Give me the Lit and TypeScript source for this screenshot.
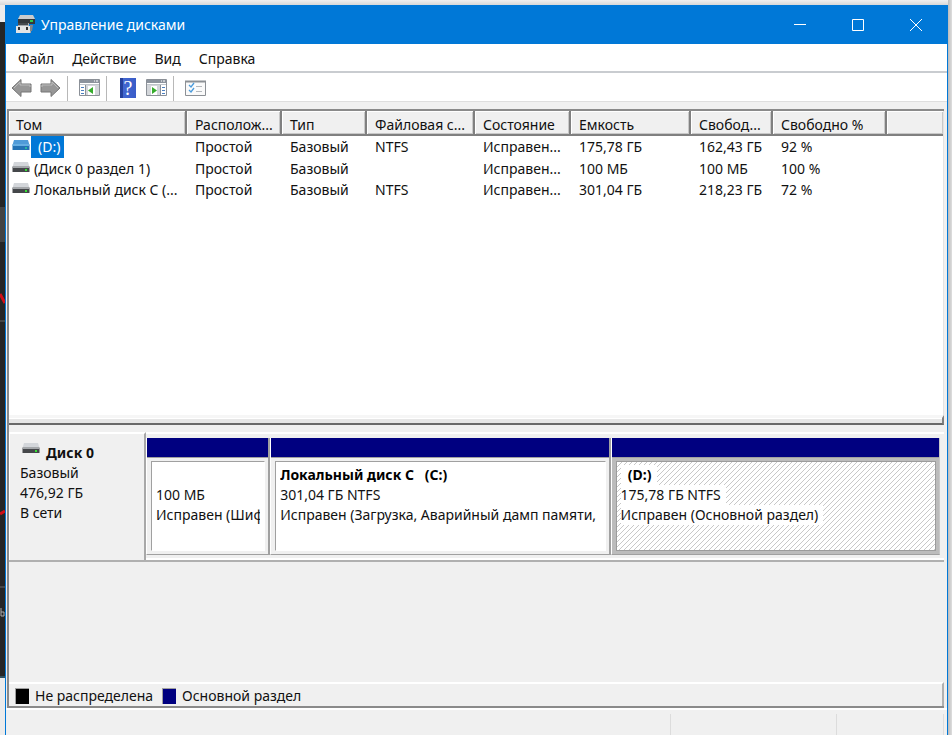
import { LitElement, html, svg, css, nothing } from "lit";
import { customElement } from "lit/decorators.js";
import { classMap } from "lit/directives/class-map.js";

interface Volume {
  name: string;
  cells: string[];
  selected?: boolean;
}

interface Partition {
  title: string;
  size: string;
  status: string;
  share: number;
  selected?: boolean;
}

const COLUMNS = ["Том", "Располож...", "Тип", "Файловая с...", "Состояние", "Емкость", "Свобод...", "Свободно %", ""];

const VOLUMES: Volume[] = [
  { name: "(D:)", cells: ["Простой", "Базовый", "NTFS", "Исправен...", "175,78 ГБ", "162,43 ГБ", "92 %", ""], selected: true },
  { name: "(Диск 0 раздел 1)", cells: ["Простой", "Базовый", "", "Исправен...", "100 МБ", "100 МБ", "100 %", ""] },
  { name: "Локальный диск C (...", cells: ["Простой", "Базовый", "NTFS", "Исправен...", "301,04 ГБ", "218,23 ГБ", "72 %", ""] },
];

const PARTITIONS: Partition[] = [
  { title: "", size: "100 МБ", status: "Исправен (Шиф", share: 124 },
  { title: "Локальный диск C   (C:)", size: "301,04 ГБ NTFS", status: "Исправен (Загрузка, Аварийный дамп памяти,", share: 340 },
  { title: "  (D:)", size: "175,78 ГБ NTFS", status: "Исправен (Основной раздел)", share: 329, selected: true },
];

const drive = (selected = false) => html`
  <svg width="18" height="10" viewBox="0 0 18 10" aria-hidden="true">
    <path d="M2 0H16L17.5 5H.5Z" fill=${selected ? "#4f9bd8" : "#d3d6da"} />
    <path d="M.5 5H17.5V10H.5Z" fill=${selected ? "#2372b4" : "#45474a"} />
    <path d="M.5 4H17.5V6H.5Z" fill=${selected ? "#67aee2" : "#a4a7aa"} />
    <path d="M13 7H15V9H13Z" fill=${selected ? "#28b7a0" : "#35e035"} />
  </svg>`;

const arrow = (right = false) => html`
  <svg width="22" height="20" viewBox="0 0 22 20" aria-hidden="true">
    <g transform=${right ? "translate(22 0) scale(-1 1)" : "translate(0 0)"}>
      <path d="M1 10L10 1.5V6H20V14H10V18.5Z" fill="#979797" stroke="#757575" stroke-linejoin="round" />
      <path d="M3 10L9 4V7H19V9" fill="none" stroke="#bcbcbc" />
    </g>
  </svg>`;

const pane = (right = false) => html`
  <svg width="21" height="18" viewBox="0 0 21 18" aria-hidden="true">
    <path d="M.5 .5H20.5V16.5H.5Z" fill="#fff" stroke="#8b9097" />
    <path d="M1 1H20V4H1Z" fill="#8c939d" />
    <path d="M15 2H16M17 2H19" stroke="#fff" />
    <path d="M1 5.5H20" stroke="#bfc4ca" />
    ${right
      ? svg`<path d="M14.5 6V16" stroke="#8b9097" /><path d="M1 6H14V16H1Z" fill="#d3d6da" />
        <path d="M16 8.5H19M16 11.5H19M16 14.5H19" stroke="#4b7fc0" /><path d="M5 7H11V16H5Z" fill="#fff" />
        <path d="M6 8V15L11 11.5Z" fill="#36ac2c" />`
      : svg`<path d="M6.5 6V16" stroke="#8b9097" /><path d="M7 6H20V16H7Z" fill="#d3d6da" />
        <path d="M2 8.5H5M2 11.5H5M2 14.5H5" stroke="#4b7fc0" /><path d="M9 7H16V16H9Z" fill="#fff" />
        <path d="M14 8V15L9 11.5Z" fill="#36ac2c" />`}
  </svg>`;

const list = html`
  <svg width="21" height="17" viewBox="0 0 21 17" aria-hidden="true">
    <path d="M.5 1.5H20.5V15.5H.5Z" fill="#fafafa" stroke="#8c9095" />
    <path d="M0 1.5H21" stroke="#8c9095" stroke-width="2" />
    <path d="M4 5L6 7L9 3M4 10L6 12L9 8" fill="none" stroke="#4a9bdc" stroke-width="1.3" />
    <path d="M11 6.5H17M11 11.5H17" stroke="#b4b8bc" />
  </svg>`;

const appIcon = html`
  <svg width="22" height="21" viewBox="0 0 22 21" aria-hidden="true">
    <path d="M5 1H18L20 5V9H3V5Z" fill="#c9cbcd" />
    <path d="M3 5H20V10H3Z" fill="#34373a" />
    <path d="M15 6H18V8H15Z" fill="#2fc94b" />
    <path d="M3 9H14V12H16V19H1V12H3Z" fill="#a5a7aa" />
    <path d="M1 12H15V19H1Z" fill="#e4e4e4" />
    <path d="M3 13H5V16H3ZM11 13H13V16H11Z" fill="#333" />
    <path d="M3 10H13" stroke="#46494d" stroke-width="2" />
    <path d="M15 11H18L17 17H15Z" fill="#838689" />
  </svg>`;

@customElement("app-root")
export class AppRoot extends LitElement {
  static styles = css`
    :host {
      display: grid;
      grid-template-columns: 5px minmax(0, 1fr) 4px;
      min-height: 100vh;
      background: linear-gradient(#f0f0f0, #d8d8d8 5px, #ececec 5px);
      font: 14px/20px "Noto Sans", "Open Sans", sans-serif;
      color: #111;
    }
    * { box-sizing: border-box; }
    button {
      border: 0;
      padding: 0;
      background: none;
      font: inherit;
      color: inherit;
    }
    svg { display: block; flex: none; }
    .left {
      margin: 22px 0 57px;
      background: #262626;
      border-bottom: 2px solid #31505f;
    }
    .right { background: linear-gradient(90deg, #bcbcbc, #dedede); }
    .window {
      margin-top: 5px;
      display: flex;
      flex-direction: column;
      background: #f0f0f0;
      border: solid #0078d7;
      border-width: 0 1px;
    }
    .title {
      display: flex;
      align-items: center;
      height: 39px;
      padding: 0 2px 0 9px;
      background: #0078d7;
      color: #fff;
    }
    .title h1 { flex: 1; margin: 0; padding-left: 4px; font: inherit; }
    .caption { display: grid; place-items: center; width: 58px; height: 39px; }
    .menu {
      display: flex;
      gap: 18px;
      height: 29px;
      padding: 2px 12px 0;
      background: #fff;
      border-bottom: 2px solid #c9ccd0;
    }
    .tools {
      display: flex;
      align-items: center;
      height: 29px;
      padding: 2px 0 0 2px;
      background: #fff;
      border-bottom: 1px solid #dedede;
    }
    .tools button { display: grid; place-items: center; width: 28px; height: 24px; }
    .rule { width: 1px; height: 25px; margin: 0 7px 0 3px; background: #b8b8b8; }
    .help {
      width: 16px;
      height: 20px;
      background: linear-gradient(90deg, #25409c 3px, #4267d0 3px, #3a5cc8);
      color: #fff;
      font: 20px/20px "Liberation Serif", serif;
    }
    .body {
      flex: 1;
      display: flex;
      flex-direction: column;
      margin: 7px 3px 0 1px;
      border: solid #8a8a8a;
      border-width: 2px 0 2px 2px;
    }
    .volumes {
      flex: 1;
      min-height: 304px;
      background: #fff;
      border-right: 1px solid #e3e3e3;
    }
    table { width: 100%; table-layout: fixed; border-collapse: separate; border-spacing: 0; }
    th, td {
      padding: 0 0 0 8px;
      text-align: left;
      font-weight: 400;
      white-space: nowrap;
      overflow: hidden;
    }
    th {
      height: 25px;
      padding-top: 4px;
      background: #f0f0f0;
      border-right: 2px solid #808080;
      border-bottom: 2px solid #808080;
      box-shadow: inset 1px 1px #fff, inset -1px -1px #c8c8c8;
      line-height: 19px;
    }
    th:last-child { border-right: 0; }
    td { height: 21px; line-height: 21px; }
    tbody tr:first-child td { height: 22px; line-height: 22px; }
    th:first-child { width: 178px; padding-left: 7px; }
    th:nth-child(2) { width: 95px; }
    th:nth-child(3) { width: 85px; }
    th:nth-child(4) { width: 108px; }
    th:nth-child(5) { width: 96px; }
    th:nth-child(6) { width: 120px; }
    th:nth-child(7) { width: 82px; }
    th:nth-child(8) { width: 114px; }
    td:first-child { padding-left: 3px; }
    .name { display: flex; align-items: flex-start; gap: 4px; }
    .name svg { margin-top: 4px; }
    .name.selected { gap: 1px; }
    .selected .label { padding: 0 4px 0 7px; background: #0078d7; color: #fff; }
    .splitter {
      height: 10px;
      border-top: 3px solid #f6f6f6;
      border-right: 2px solid #808080;
      border-bottom: 2px solid #696969;
      background: linear-gradient(#fff 1px, #e6e6e6 1px, #e6e6e6);
    }
    .disks {
      height: 257px;
      padding-top: 7px;
    }
    .disk {
      display: grid;
      grid-template-columns: 137px minmax(0, 1fr);
      height: 130px;
      border-bottom: 2px solid #b0b0b0;
    }
    .disk-info {
      border-top: 2px solid #fff;
      border-left: 1px solid #fff;
      border-right: 2px solid #a8a8a8;
      padding: 9px 0 0 10px;
    }
    .disk-name { display: flex; gap: 6px; font-weight: 700; padding-left: 2px; }
    .disk-info p, .disk-info h2 { margin: 0; font-size: 14px; line-height: 20px; }
    .partitions {
      display: grid;
      border-top: 2px solid #fff;
      border-bottom: 2px solid #fff;
      padding: 4px 4px 3px 0;
    }
    .partition {
      display: flex;
      flex-direction: column;
      min-width: 0;
      border-left: 1px solid #fff;
      border-right: 2px solid #a0a0a0;
      border-bottom: 1px solid #a0a0a0;
      text-align: left;
    }
    .partition::before {
      content: "";
      height: 19px;
      background: #000080;
      border-bottom: 1px solid #a0a0a0;
    }
    .frame {
      display: block;
      flex: 1;
      align-self: stretch;
      border: solid #f0f0f0;
      border-width: 3px 3px 3px 4px;
    }
    .face {
      display: block;
      height: 100%;
      padding: 3px 4px 0;
      background: #fff;
      border: 1px solid #fff;
      border-top-color: #a0a0a0;
      border-left-color: #a0a0a0;
    }
    .line { display: block; height: 20px; white-space: pre; overflow: hidden; }
    .line.bold { font-weight: 700; color: #000; }
    .partition.selected { border-right: 1px solid #c8c8c8; }
    .selected .frame { border-color: #bcbcbc; }
    .selected .face {
      border-color: #9c9c9c;
      background: linear-gradient(135deg, #fff 42%, #c8c8c8 42% 58%, #fff 58%) 0 0 / 5px 5px;
    }
    .selected .line { width: fit-content; max-width: 100%; padding-right: 5px; background: #fff; }
    .legend {
      display: flex;
      align-items: center;
      height: 24px;
      padding: 2px 0 0 6px;
      border-top: 2px solid #fff;
      border-right: 2px solid #b0b0b0;
    }
    .swatch {
      width: 14px;
      height: 16px;
      margin-right: 6px;
      border-top: 1px solid #a0a0a0;
      border-left: 1px solid #a0a0a0;
      background: #000;
    }
    .swatch.primary { margin-left: 9px; background: #000080; }
    .status {
      display: grid;
      grid-template-columns: minmax(0, 1fr) 166px 107px 3px;
      height: 27px;
      padding-top: 4px;
      border-top: 2px solid #fff;
    }
    .status span { border-right: 1px solid #dcdcdc; }
  `;

  render() {
    return html`
      <div class="left">
        <svg width="5" height="600" viewBox="0 0 5 600" aria-hidden="true">
          <path d="M0 185H5V220H0Z" fill="#444" />
          <path d="M0 299H5M0 565H5" stroke="#666" />
          <path d="M0 272L5 281M0 492L5 489" stroke="#d01018" stroke-width="3" />
          <path d="M1 586V594M1 590H4V594H1" fill="none" stroke="#aaa" />
        </svg>
      </div>
      <main class="window">
        <header class="title">
          ${appIcon}
          <h1>Управление дисками</h1>
          ${this.caption("Свернуть", "M1 6.5H13")}
          ${this.caption("Развернуть", "M1.5 1.5H12.5V12.5H1.5Z")}
          ${this.caption("Закрыть", "M1 1L13 13M13 1L1 13")}
        </header>
        <nav class="menu">
          ${["Файл", "Действие", "Вид", "Справка"].map((t) => html`<button type="button">${t}</button>`)}
        </nav>
        <div class="tools">
          <button type="button" aria-label="Назад">${arrow()}</button>
          <button type="button" aria-label="Вперед">${arrow(true)}</button>
          <span class="rule"></span>
          <button type="button" aria-label="Дерево консоли">${pane()}</button>
          <span class="rule"></span>
          <button type="button" aria-label="Справка"><span class="help">?</span></button>
          <button type="button" aria-label="Панель действий">${pane(true)}</button>
          <span class="rule"></span>
          <button type="button" aria-label="Параметры">${list}</button>
        </div>
        <section class="body">
          <div class="volumes">
            <table>
              <thead>
                <tr>${COLUMNS.map((c) => html`<th scope="col">${c}</th>`)}</tr>
              </thead>
              <tbody>
                ${VOLUMES.map((v) => html`
                  <tr>
                    <td>
                      <div class=${classMap({ name: true, selected: !!v.selected })}>
                        ${drive(v.selected)}<span class="label">${v.name}</span>
                      </div>
                    </td>
                    ${v.cells.map((c) => html`<td>${c}</td>`)}
                  </tr>`)}
              </tbody>
            </table>
          </div>
          <div class="splitter"></div>
          <div class="disks">
            <div class="disk">
              <div class="disk-info">
                <div class="disk-name">${drive()}<h2>Диск 0</h2></div>
                <p>Базовый</p>
                <p>476,92 ГБ</p>
                <p>В сети</p>
              </div>
              <div class="partitions" style="grid-template-columns:${PARTITIONS.map((p) => `minmax(0,${p.share}fr)`).join(" ")}">
                ${PARTITIONS.map((p) => html`
                  <button type="button" class=${classMap({ partition: true, selected: !!p.selected })}>
                    <span class="frame"><span class="face">
                      <span class="line bold">${p.title || nothing}</span>
                      <span class="line">${p.size}</span>
                      <span class="line">${p.status}</span>
                    </span></span>
                  </button>`)}
              </div>
            </div>
          </div>
          <div class="legend">
            <span class="swatch"></span>Не распределена
            <span class="swatch primary"></span>Основной раздел
          </div>
        </section>
        <footer class="status"><span></span><span></span><span></span></footer>
      </main>
      <div class="right"></div>
    `;
  }

  private caption(label: string, path: string) {
    return html`
      <button type="button" class="caption" aria-label=${label}>
        <svg width="14" height="14" viewBox="0 0 14 14" aria-hidden="true">
          <path d=${path} fill="none" stroke="#fff" />
        </svg>
      </button>`;
  }
}
